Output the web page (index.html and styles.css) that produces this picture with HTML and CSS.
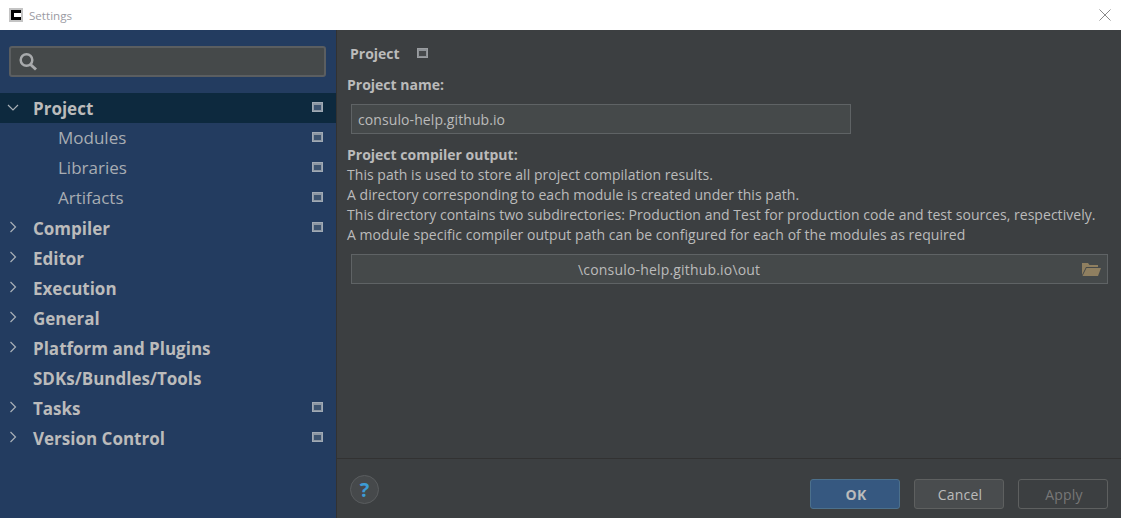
FILE: index.html
```html
<!DOCTYPE html>
<html lang="en">
<head>
<meta charset="utf-8">
<title>Settings</title>
<link rel="stylesheet" href="styles.css">
</head>
<body>
<div class="dialog">
  <header class="titlebar">
    <span class="app-icon"><span class="app-icon-c"></span></span>
    <span class="title">Settings</span>
    <svg class="close" width="12" height="12" viewBox="0 0 12 12"><path d="M.5.5l11 11M11.500.5l-11 11" stroke="#8a8a8a" fill="none"/></svg>
  </header>
  <div class="main">
    <aside class="sidebar">
      <div class="search-wrap">
        <div class="search">
          <svg width="20" height="20" viewBox="0 0 20 20"><circle cx="8.500" cy="8" r="5.800" fill="none" stroke="#a8aaac" stroke-width="2.500"/><path d="M12.500 12.500l5.500 5" stroke="#a8aaac" stroke-width="3" fill="none"/></svg>
        </div>
      </div>
      <nav class="tree">
        <div class="row selected"><svg class="arrow" width="12" height="12" viewBox="0 0 12 12"><path d="M1 4l5 5 5-5" fill="none" stroke="#a9b0b7" stroke-width="1.200"/></svg><span class="label">Project</span><span class="scope"></span></div>
        <div class="row child"><span class="sublabel">Modules</span><span class="scope"></span></div>
        <div class="row child"><span class="sublabel">Libraries</span><span class="scope"></span></div>
        <div class="row child"><span class="sublabel">Artifacts</span><span class="scope"></span></div>
        <div class="row"><svg class="arrow" width="12" height="12" viewBox="0 0 12 12"><path d="M3.500 1l5 5-5 5" fill="none" stroke="#a9b0b7" stroke-width="1.200"/></svg><span class="label">Compiler</span><span class="scope"></span></div>
        <div class="row"><svg class="arrow" width="12" height="12" viewBox="0 0 12 12"><path d="M3.500 1l5 5-5 5" fill="none" stroke="#a9b0b7" stroke-width="1.200"/></svg><span class="label">Editor</span></div>
        <div class="row"><svg class="arrow" width="12" height="12" viewBox="0 0 12 12"><path d="M3.500 1l5 5-5 5" fill="none" stroke="#a9b0b7" stroke-width="1.200"/></svg><span class="label">Execution</span></div>
        <div class="row"><svg class="arrow" width="12" height="12" viewBox="0 0 12 12"><path d="M3.500 1l5 5-5 5" fill="none" stroke="#a9b0b7" stroke-width="1.200"/></svg><span class="label">General</span></div>
        <div class="row"><svg class="arrow" width="12" height="12" viewBox="0 0 12 12"><path d="M3.500 1l5 5-5 5" fill="none" stroke="#a9b0b7" stroke-width="1.200"/></svg><span class="label">Platform and Plugins</span></div>
        <div class="row no-arrow"><span class="label">SDKs/Bundles/Tools</span></div>
        <div class="row"><svg class="arrow" width="12" height="12" viewBox="0 0 12 12"><path d="M3.500 1l5 5-5 5" fill="none" stroke="#a9b0b7" stroke-width="1.200"/></svg><span class="label">Tasks</span><span class="scope"></span></div>
        <div class="row"><svg class="arrow" width="12" height="12" viewBox="0 0 12 12"><path d="M3.500 1l5 5-5 5" fill="none" stroke="#a9b0b7" stroke-width="1.200"/></svg><span class="label">Version Control</span><span class="scope"></span></div>
      </nav>
    </aside>
    <section class="content">
      <div class="panel">
        <div class="crumb"><span class="crumb-text">Project</span><span class="scope"></span></div>
        <div class="field-label name-label">Project name:</div>
        <div class="input name-input">consulo-help.github.io</div>
        <div class="desc">
          <div class="field-label tight">Project compiler output:</div>
          <div>This path is used to store all project compilation results.</div>
          <div>A directory corresponding to each module is created under this path.</div>
          <div>This directory contains two subdirectories: Production and Test for production code and test sources, respectively.</div>
          <div>A module specific compiler output path can be configured for each of the modules as required</div>
        </div>
        <div class="input path-input">
          <span class="path">\consulo-help.github.io\out</span>
          <svg width="20" height="16" viewBox="0 0 20 16"><path d="M1 14V2h6l1.500 2H17v2H5z" fill="#8f7f60"/><path d="M5.500 7H20l-3 8H1.500z" fill="#8f7f60"/></svg>
        </div>
      </div>
      <footer class="footer">
        <div class="help">?</div>
        <div class="buttons">
          <div class="btn primary">OK</div>
          <div class="btn">Cancel</div>
          <div class="btn disabled">Apply</div>
        </div>
      </footer>
    </section>
  </div>
</div>
</body>
</html>
```
FILE: styles.css
```css
* { box-sizing: border-box; }
html, body { margin: 0; padding: 0; }
body { width: 1121px; height: 518px; overflow: hidden; font-family: "Open Sans", "Noto Sans", sans-serif; background: #3c3f41; }
.dialog { display: flex; flex-direction: column; height: 518px; }
.titlebar { height: 30px; background: #fff; display: flex; align-items: center; padding: 0 10px 0 9px; flex: none; }
.app-icon { width: 14px; height: 14px; background: #c4c4c4; display: flex; align-items: center; justify-content: flex-end; padding-right: 2px; margin-right: 6px; }
.app-icon-c { width: 10px; height: 10px; border: solid #000; border-width: 3px 0 3px 3px; background: #fff; display: block; }
.title { font-size: 11.6px; color: #9b9ba3; flex: 1; }
.close { flex: none; }
.main { flex: 1; display: flex; min-height: 0; }
.sidebar { width: 336px; flex: none; background: #233c60; }
.search-wrap { padding: 16px 10px 16px 9px; }
.search { height: 31px; background: #45494a; border: 2px solid #5b5e60; border-radius: 3px; display: flex; align-items: center; padding-left: 7px; width: 317px; }
.tree { display: flex; flex-direction: column; }
.row { height: 30px; display: flex; align-items: center; padding: 0 13px 2px 7px; color: #bbbbbb; }
.row.selected { background: #0d293e; }
.row.child { padding-left: 58px; }
.row.no-arrow { padding-left: 33px; }
.arrow { flex: none; margin-right: 14px; }
.label { flex: 1; font-size: 17px; font-weight: 700; padding-top: 2px; }
.sublabel { flex: 1; font-size: 17px; color: #a8adb3; }
.scope { width: 11px; height: 10px; border: 1px solid #a0aab5; background: #8d97a3; display: block; position: relative; flex: none; }
.scope::after { content: ""; position: absolute; left: 1px; right: 1px; top: 2px; bottom: 1px; background: #3d5470; }
.crumb .scope { background: #8d9195; border-color: #9a9da0; margin-left: 17px; }
.crumb .scope::after { background: #46494b; }
.content { flex: 1; display: flex; flex-direction: column; min-width: 0; background: #3c3f41; color: #bbbbbb; border-left: 1px solid #323232; }
.panel { flex: 1; padding: 0 13px 0 10px; font-size: 14px; letter-spacing: .04px; }
.crumb { height: 47px; padding: 0 0 1px 3px; display: flex; align-items: center; }
.crumb-text { font-weight: 700; font-size: 14px; letter-spacing: 0; }
.field-label { font-weight: 700; font-size: 14px; line-height: 16px; height: 16px; margin-bottom: 10px; letter-spacing: 0; }
.name-label { margin-bottom: 11px; }
.field-label.tight { margin-bottom: 0; height: 20px; line-height: 20px; }
.input { background: #45494a; border: 1px solid #5f6365; height: 30px; display: flex; align-items: center; margin-left: 4px; color: #bbbbbb; font-size: 14px; }
.name-input { width: 500px; padding-left: 6px; letter-spacing: .09px; }
.desc { margin-top: 11px; line-height: 20px; }
.path-input { margin-top: 9px; justify-content: space-between; padding: 0 6px 0 226px; letter-spacing: .18px; }
.footer { height: 60px; flex: none; border-top: 1px solid #323232; display: flex; align-items: flex-start; justify-content: space-between; padding: 16px 13px 0 13px; }
.help { width: 29px; height: 29px; border-radius: 50%; background: #46494b; border: 1px solid #5a5d5f; color: #3d9bd4; font-size: 20px; font-weight: 700; display: flex; align-items: center; justify-content: center; }
.buttons { display: flex; gap: 14px; margin-top: 4px; }
.btn { width: 90px; height: 30px; border: 1px solid #5e6060; border-radius: 3px; background: #494c4e; display: flex; align-items: center; justify-content: center; font-size: 14px; color: #bbbbbb; letter-spacing: .2px; padding-left: 2px; }
.btn.primary { background: #365880; border-color: #4c708c; font-weight: 700; }
.btn.disabled { background: transparent; border-color: #5e6060; color: #777777; }
```
